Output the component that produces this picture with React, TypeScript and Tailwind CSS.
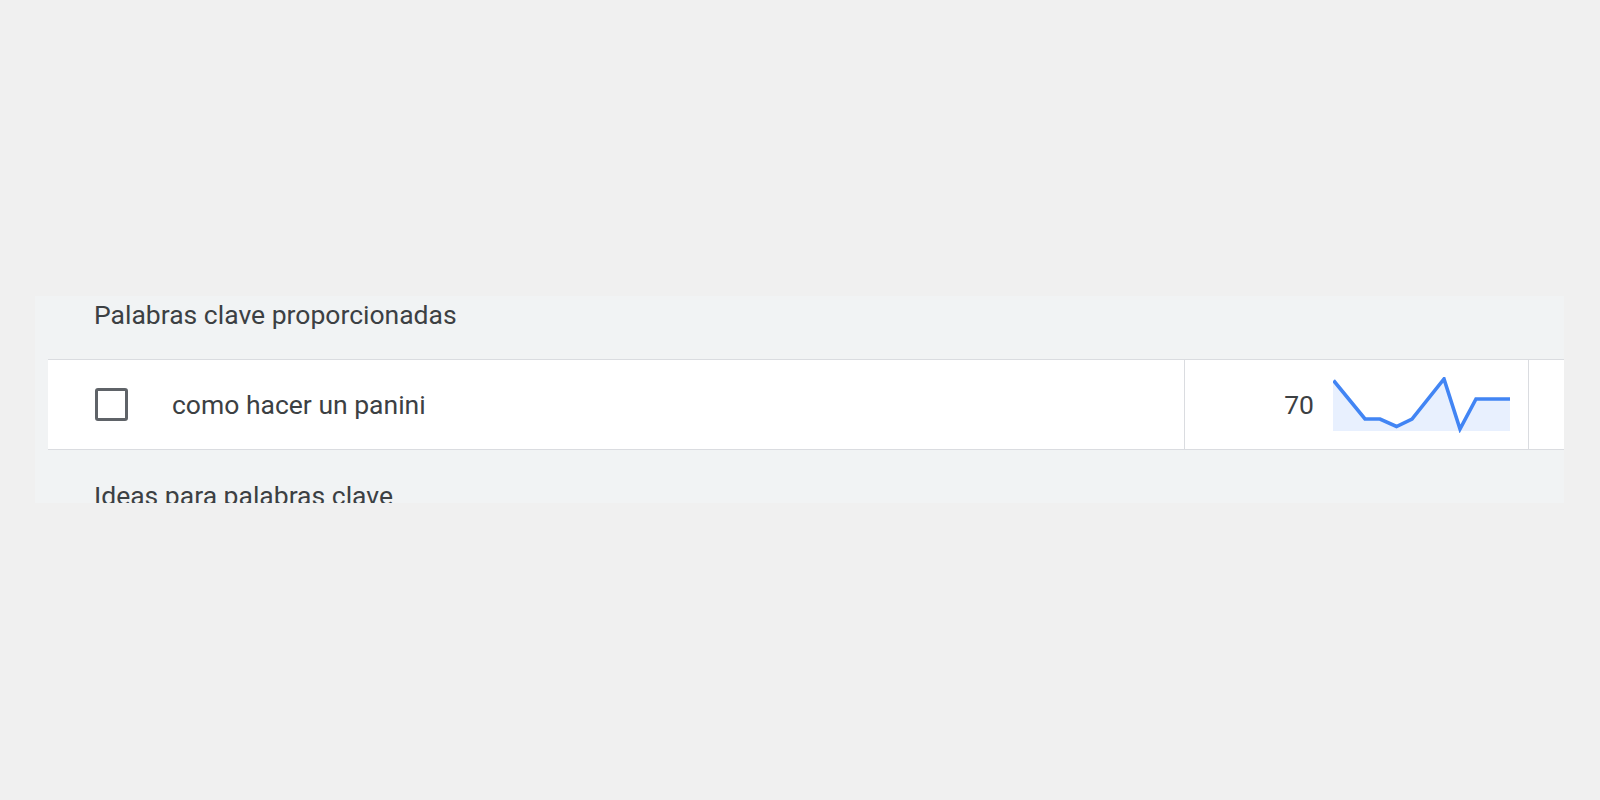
const trend = [
  [0.5, 3.5],
  [32, 42],
  [47, 42],
  [63.5, 49.5],
  [79, 42],
  [111, 2],
  [127, 52],
  [143, 22],
  [177, 22],
]

function Sparkline() {
  const line = trend.map(([x, y]) => `${x},${y}`).join(' ')
  const area = `0,3.5 ${line} 177,54 0,54`
  return (
    <svg width="177" height="56" viewBox="0 0 177 56" className="shrink-0">
      <polygon points={area} fill="#e8f0fe" />
      <polyline points={line} fill="none" stroke="#4285f4" strokeWidth="3.6" strokeLinejoin="miter" />
    </svg>
  )
}

export default function App() {
  return (
    <div
      className="w-full h-screen bg-[#f0f0f0] pt-[296px] pl-[35px] pr-[36px]"
      style={{ fontFamily: 'Roboto, "Noto Sans", sans-serif' }}
    >
      <div className="h-[207px] bg-[#f1f3f4] overflow-hidden">
        {/* Provided keywords header */}
        <div className="h-[63px] pl-[59px] pt-[4px]">
          <span className="text-[26.5px] leading-[30px] text-[#3c4043]">
            Palabras clave proporcionadas
          </span>
        </div>

        {/* Keyword row */}
        <div className="ml-[13px] h-[91px] flex bg-white border-y border-[#dadce0]">
          <div className="w-[1137px] flex items-center pl-[47px] gap-[44px] border-r border-[#dadce0]">
            <div className="w-[33px] h-[33px] rounded-[3px] border-[3px] border-[#5f6368]" />
            <span className="text-[26.5px] leading-[30px] text-[#3c4043]">como hacer un panini</span>
          </div>
          <div className="w-[344px] flex items-center justify-end gap-[19px] pr-[18px] border-r border-[#dadce0]">
            <span className="text-[26.5px] leading-[30px] text-[#3c4043]">70</span>
            <Sparkline />
          </div>
          <div className="flex-1" />
        </div>

        {/* Keyword ideas header */}
        <div className="pl-[59px] pt-[31px]">
          <span className="text-[26.5px] leading-[30px] text-[#3c4043]">Ideas para palabras clave</span>
        </div>
      </div>
    </div>
  )
}
